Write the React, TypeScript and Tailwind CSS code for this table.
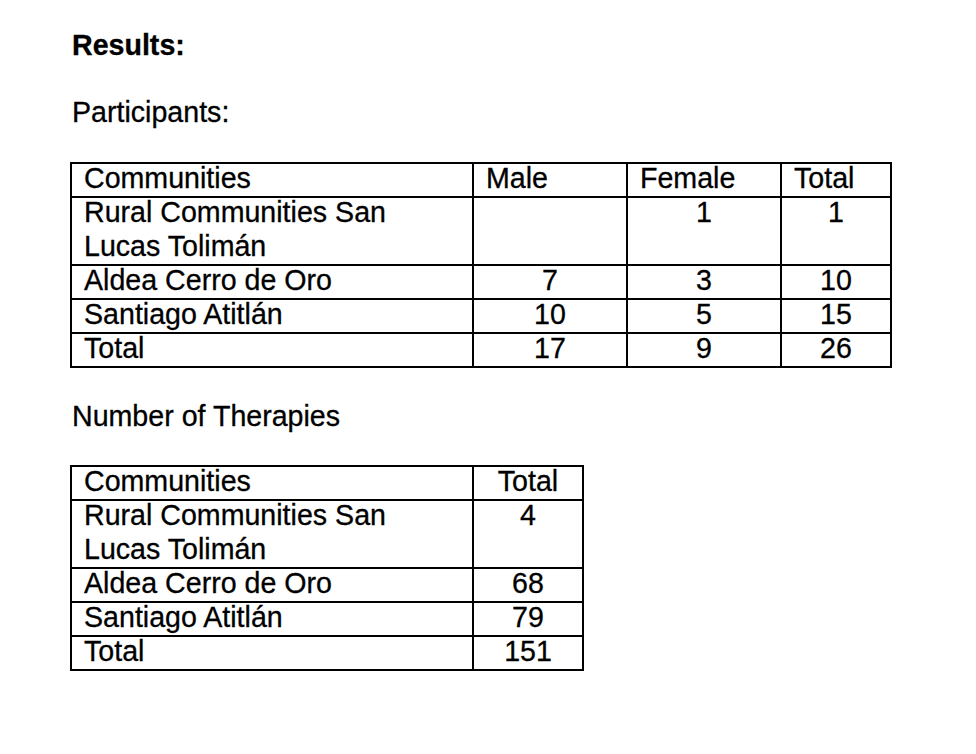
import React from "react";

const font = { fontFamily: '"Liberation Sans", Arial, sans-serif' };

function Cell({
  children,
  className = "",
  center = false,
  border = true,
}: {
  children?: React.ReactNode;
  className?: string;
  center?: boolean;
  border?: boolean;
}) {
  return (
    <div
      className={`${border ? "border-l-2 border-black" : ""} ${
        center ? "text-center" : "pl-[12px] pr-[12px]"
      } ${className}`}
    >
      <div className="-mt-[3px] leading-[34px] whitespace-nowrap">{children}</div>
    </div>
  );
}

type Row = { label: React.ReactNode; vals: (string | number)[]; tall?: boolean };

function Table({
  cols,
  headers,
  rows,
  width,
  headerCenter,
}: {
  cols: string;
  headers: string[];
  rows: Row[];
  width: string;
  headerCenter: boolean[];
}) {
  return (
    <div className={`border-2 border-black ${width}`}>
      <div className={`grid ${cols} h-[32px]`}>
        {headers.map((h, i) => (
          <Cell key={i} border={i > 0} center={headerCenter[i]}>
            {h}
          </Cell>
        ))}
      </div>
      {rows.map((r, ri) => (
        <div
          key={ri}
          className={`grid ${cols} border-t-2 border-black ${r.tall ? "h-[68px]" : "h-[34px]"}`}
        >
          <Cell border={false}>{r.label}</Cell>
          {r.vals.map((v, vi) => (
            <Cell key={vi} center>
              {v}
            </Cell>
          ))}
        </div>
      ))}
    </div>
  );
}

export default function App() {
  return (
    <div
      className="w-[976px] h-[754px] bg-white text-black text-[28.6px] [-webkit-text-stroke:0.3px_black]"
      style={font}
    >
      <div className="pt-[28px] pl-[70px]">
        <p className="pl-[2px] leading-[34px] font-bold">Results:</p>
        <p className="pl-[2px] mt-[33px] leading-[34px]">Participants:</p>
        <div className="mt-[33px]">
          <Table
            width="w-[822px]"
            cols="grid-cols-[400px_154px_154px_110px]"
            headers={["Communities", "Male", "Female", "Total"]}
            headerCenter={[false, false, false, false]}
            rows={[
              {
                label: (
                  <>
                    Rural Communities San
                    <br />
                    Lucas Tolimán
                  </>
                ),
                vals: ["", 1, 1],
                tall: true,
              },
              { label: "Aldea Cerro de Oro", vals: [7, 3, 10] },
              { label: "Santiago Atitlán", vals: [10, 5, 15] },
              { label: "Total", vals: [17, 9, 26] },
            ]}
          />
        </div>
        <p className="pl-[2px] mt-[31px] leading-[34px]">Number of Therapies</p>
        <div className="mt-[32px]">
          <Table
            width="w-[514px]"
            cols="grid-cols-[400px_110px]"
            headers={["Communities", "Total"]}
            headerCenter={[false, true]}
            rows={[
              {
                label: (
                  <>
                    Rural Communities San
                    <br />
                    Lucas Tolimán
                  </>
                ),
                vals: [4],
                tall: true,
              },
              { label: "Aldea Cerro de Oro", vals: [68] },
              { label: "Santiago Atitlán", vals: [79] },
              { label: "Total", vals: [151] },
            ]}
          />
        </div>
      </div>
    </div>
  );
}
